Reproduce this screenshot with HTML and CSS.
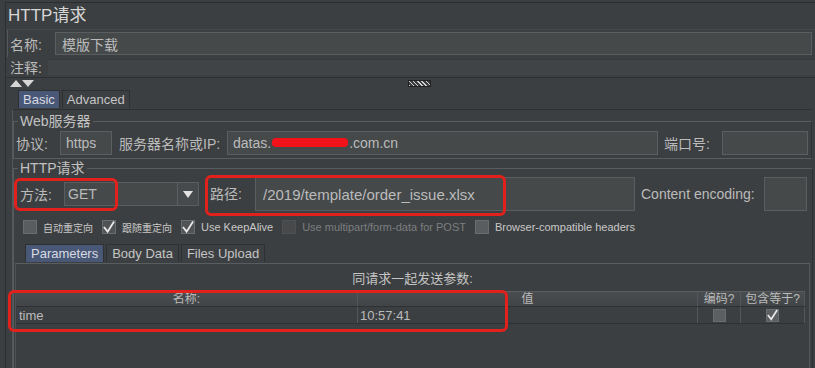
FILE: index.html
```html
<!DOCTYPE html>
<html lang="zh-CN">

<head>
    <meta charset="UTF-8">
    <meta name="viewport" content="width=device-width, initial-scale=1.0">
    <title>HTTP请求</title>
    <link rel="stylesheet" href="styles.css">
</head>

<body>
    <div class="app">
        <div class="main">
            <h1 class="title">HTTP请求</h1>

            <div class="name-row">
                <label class="name-label">名称:</label>
                <div class="field name-field">模版下载</div>
            </div>
            <div class="comment-row">
                <label class="comment-label">注释:</label>
                <div class="comment-field"></div>
            </div>

            <div class="splitter">
                <span class="arrows">
                    <svg width="24" height="7" viewBox="0 0 24 7">
                        <polygon points="0,7 6,0 12,7" fill="#d6d6d6" />
                        <polygon points="12,0 24,0 18,7" fill="#d6d6d6" />
                    </svg>
                </span>
                <span class="grip"></span>
            </div>

            <div class="tabs">
                <div class="tab active">Basic</div>
                <div class="tab">Advanced</div>
            </div>

            <div class="tab-body">
                <fieldset class="group web-group">
                    <legend>Web服务器</legend>
                    <div class="web-row">
                        <span class="lbl lbl-protocol">协议:</span>
                        <div class="field protocol-field">https</div>
                        <span class="lbl lbl-server">服务器名称或IP:</span>
                        <div class="field server-field">datas.<span class="redact"></span>.com.cn</div>
                        <span class="lbl lbl-port">端口号:</span>
                        <div class="field port-field"></div>
                    </div>
                </fieldset>

                <fieldset class="group http-group">
                    <legend>HTTP请求</legend>
                    <div class="http-row">
                        <span class="lbl lbl-method">方法:</span>
                        <div class="combo">
                            <div class="combo-text">GET</div>
                            <div class="combo-btn">
                                <svg width="10" height="7" viewBox="0 0 10 7">
                                    <polygon points="0,0 10,0 5,7" fill="#e2e2e2" />
                                </svg>
                            </div>
                        </div>
                        <span class="lbl lbl-path">路径:</span>
                        <div class="field path-field">/2019/template/order_issue.xlsx</div>
                        <span class="lbl lbl-encoding">Content encoding:</span>
                        <div class="field encoding-field"></div>
                    </div>

                    <div class="check-row">
                        <span class="check"></span><span class="check-text cjk">自动重定向</span>
                        <span class="check checked">
                            <svg width="13" height="13" viewBox="0 0 13 13">
                                <polyline points="1,6 5,11 12,0" fill="none" stroke="#e8e8e8" stroke-width="2" />
                            </svg>
                        </span><span class="check-text cjk">跟随重定向</span>
                        <span class="check checked">
                            <svg width="13" height="13" viewBox="0 0 13 13">
                                <polyline points="1,6 5,11 12,0" fill="none" stroke="#e8e8e8" stroke-width="2" />
                            </svg>
                        </span><span class="check-text">Use KeepAlive</span>
                        <span class="check disabled"></span><span class="check-text dim">Use multipart/form-data for POST</span>
                        <span class="check"></span><span class="check-text">Browser-compatible headers</span>
                    </div>

                    <div class="tabs inner-tabs">
                        <div class="tab active">Parameters</div>
                        <div class="tab">Body Data</div>
                        <div class="tab">Files Upload</div>
                    </div>

                    <div class="params">
                        <div class="params-caption">同请求一起发送参数:</div>
                        <div class="table">
                            <div class="thead">
                                <div class="col col-name">名称:</div>
                                <div class="col col-value">值</div>
                                <div class="col col-enc">编码?</div>
                                <div class="col col-eq">包含等于?</div>
                            </div>
                            <div class="trow">
                                <div class="col col-name">time</div>
                                <div class="col col-value">10:57:41</div>
                                <div class="col col-enc"><span class="mini-check"></span></div>
                                <div class="col col-eq">
                                    <span class="mini-check">
                                        <svg width="13" height="13" viewBox="0 0 13 13">
                                            <polyline points="1,6 5,11 12,0" fill="none" stroke="#e8e8e8" stroke-width="2" />
                                        </svg>
                                    </span>
                                </div>
                            </div>
                        </div>
                    </div>
                </fieldset>
            </div>
        </div>

        <!-- red annotation marks drawn over the screenshot -->
        <div class="mark mark-method"></div>
        <div class="mark mark-path"></div>
        <div class="mark mark-table"></div>
    </div>
</body>

</html>
```

FILE: styles.css
```css
*,
*::after,
*::before {
    box-sizing: border-box;
    padding: 0;
    margin: 0;
}

body {
    width: 815px;
    height: 368px;
    overflow: hidden;
    background-color: #3c3f41;
    color: #bbbbbb;
    font-family: "Liberation Sans", "Noto Sans CJK SC", sans-serif;
    font-size: 14px;
}

.app {
    position: relative;
    height: 100%;
    padding-left: 5px;
    padding-top: 2px;
}

.main {
    height: 100%;
    border-left: 1px solid #2c2e2f;
    border-top: 1px solid #2a2c2d;
}

.title {
    height: 27px;
    line-height: 26px;
    padding-left: 2px;
    font-size: 17px;
    font-weight: normal;
    color: #d6d6d6;
    border-bottom: 1px solid #46494b;
}

/* name / comment */
.name-row {
    display: flex;
    align-items: center;
    height: 27px;
    margin-left: 1px;
    padding: 2px 3px 2px 2px;
    border-left: 1px solid #555859;
}

.name-label {
    width: 45px;
}

.field {
    background-color: #45494a;
    border: 1px solid #5b5e60;
    color: #bbbbbb;
    display: flex;
    align-items: center;
    white-space: nowrap;
}

.name-field {
    flex: 1;
    height: 23px;
    padding-left: 6px;
}

.comment-row {
    display: flex;
    align-items: center;
    height: 21px;
    padding-left: 4px;
    border-bottom: 1px solid #2d2f30;
}

.comment-label {
    width: 38px;
}

.comment-field {
    flex: 1;
    height: 16px;
    background-color: #414446;
    border-top: 1px solid #37393b;
}

/* splitter */
.splitter {
    display: flex;
    align-items: center;
    height: 11px;
    padding-left: 4px;
}

.arrows {
    display: flex;
    width: 398px;
}

.grip {
    width: 23px;
    height: 7px;
    background-image: repeating-linear-gradient(45deg, #d0d0d0 0 1px, #3c3f41 1px 3px);
    border: 1px solid #222;
}

/* tabs */
.tabs {
    display: flex;
    gap: 2px;
    height: 19px;
    padding-left: 12px;
    margin-top: 1px;
    font-size: 13px;
}

.tab {
    padding: 0 4px;
    line-height: 17px;
    height: 18px;
    background-color: #3d4042;
    border: 1px solid #2e3031;
    border-bottom: none;
    color: #c4c4c4;
}

.tab.active {
    background-color: #4a5877;
    color: #d8dbe3;
}

.tab-body {
    margin-left: 6px;
    margin-right: 3px;
    padding-top: 3px;
    border-top: 1px solid #2d2f30;
    border-left: 1px solid #545759;
    height: 260px;
}

/* groups */
.group {
    border: 1px solid #595c5e;
    border-right-color: #2e3031;
    padding: 0 3px 3px 2px;
}

.group legend {
    font-size: 14px;
    line-height: 16px;
    padding: 0 2px;
    margin-left: 2px;
    color: #c2c2c2;
}

.web-row {
    display: flex;
    align-items: center;
    height: 25px;
    margin-top: 1px;
}

.lbl {
    white-space: nowrap;
}

.lbl-protocol {
    width: 44px;
}

.protocol-field {
    width: 52px;
    height: 24px;
    padding-left: 5px;
}

.lbl-server {
    width: 108px;
    margin-left: 7px;
}

.server-field {
    width: 431px;
    height: 24px;
    padding-left: 5px;
}

.redact {
    display: inline-block;
    width: 76px;
    height: 9px;
    margin: 0 1px;
    background-color: #f2121a;
    border-radius: 4px;
}

.lbl-port {
    width: 58px;
    margin-left: 6px;
}

.port-field {
    width: 86px;
    height: 24px;
}

.http-group {
    margin-top: 1px;
    height: 210px;
    border-bottom: none;
}

.http-row {
    display: flex;
    align-items: center;
    height: 38px;
    margin-top: -1px;
}

.lbl-method {
    width: 48px;
    padding-left: 4px;
}

.combo {
    display: flex;
    width: 135px;
    height: 24px;
    border: 1px solid #5b5e60;
    background-color: #45494a;
}

.combo-text {
    flex: 1;
    padding-left: 3px;
    line-height: 22px;
    border-right: 1px solid #5b5e60;
}

.combo-btn {
    width: 20px;
    display: flex;
    align-items: center;
    justify-content: center;
    background-color: #474a4c;
}

.lbl-path {
    width: 53px;
    height: 34px;
    margin-left: 4px;
    padding-left: 7px;
    line-height: 34px;
    border-right: 1px solid #5b5e60;
}

.path-field {
    width: 379px;
    height: 34px;
    padding-left: 7px;
    font-size: 15px;
    border-left: none;
}

.lbl-encoding {
    width: 116px;
    margin-left: 6px;
}

.encoding-field {
    width: 43px;
    height: 34px;
    margin-left: 7px;
}

/* checkboxes */
.check-row {
    display: flex;
    align-items: center;
    height: 18px;
    margin-top: 5px;
    padding-left: 7px;
    font-size: 11px;
}

.check {
    display: flex;
    align-items: center;
    justify-content: center;
    width: 14px;
    height: 14px;
    background-color: #5a5d5f;
    border: 1px solid #6a6d6f;
}

.check.checked {
    background-color: #505355;
}

.check.disabled {
    background-color: #47494b;
    border-color: #4e5052;
}

.check-text {
    margin-left: 6px;
    margin-right: 9px;
    color: #c8c8c8;
}

.check-text.cjk {
    font-size: 10px;
}

.check-text.dim {
    color: #7b7e80;
}

.inner-tabs {
    margin-top: 8px;
    padding-left: 9px;
}

.inner-tabs .tab {
    padding: 0 5px;
}

/* parameters panel */
.params {
    margin-left: -1px;
    border-top: 1px solid #5a5d5f;
    border-left: 1px solid #4f5254;
    border-right: 1px solid #56595b;
    height: 110px;
    margin-right: -1px;
}

.params-caption {
    text-align: center;
    font-size: 13px;
    line-height: 22px;
    padding-top: 4px;
    height: 27px;
    color: #c4c4c4;
}

.table {
    margin-right: 4px;
    font-size: 13px;
}

.thead,
.trow {
    display: flex;
}

.thead {
    height: 16px;
    font-size: 12px;
    line-height: 15px;
    background-image: linear-gradient(#4a4d4f, #424547);
    border-top: 1px solid #5b5e60;
    border-bottom: 1px solid #2f3133;
    text-align: center;
}

.trow {
    height: 17px;
    line-height: 17px;
    border-bottom: 1px solid #2f3133;
}

.col {
    border-right: 1px solid #55585a;
    white-space: nowrap;
}

.col-name {
    width: 342px;
}

.col-value {
    width: 340px;
}

.col-enc {
    width: 43px;
    display: flex;
    justify-content: center;
}

.col-eq {
    width: 64px;
    display: flex;
    justify-content: center;
}

.trow .col-name {
    padding-left: 3px;
    text-align: left;
}

.trow .col-value {
    padding-left: 2px;
}

.mini-check {
    display: flex;
    align-items: center;
    justify-content: center;
    width: 13px;
    height: 13px;
    margin-top: 2px;
    background-color: #5c5f61;
    border: 1px solid #6a6d6f;
}

/* red annotations */
.mark {
    position: absolute;
    border: 3px solid #e2211c;
    border-radius: 6px;
}

.mark-method {
    left: 14px;
    top: 178px;
    width: 104px;
    height: 33px;
}

.mark-path {
    left: 205px;
    top: 175px;
    width: 301px;
    height: 41px;
}

.mark-table {
    left: 8px;
    top: 290px;
    width: 500px;
    height: 42px;
}
```
